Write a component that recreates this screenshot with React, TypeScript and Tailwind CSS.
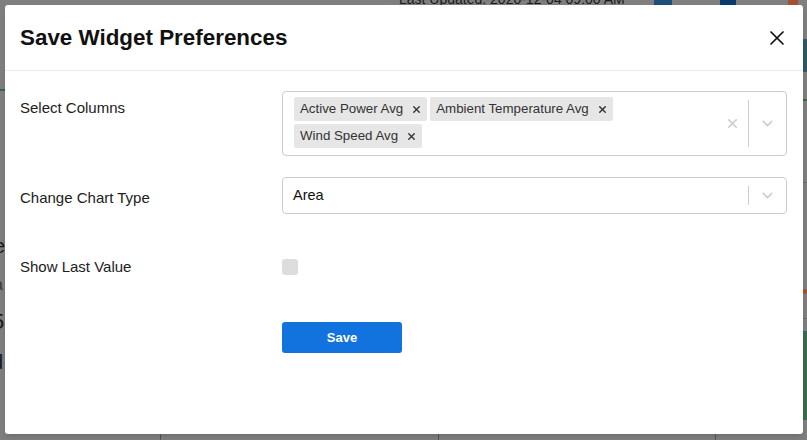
import { X, ChevronDown } from "lucide-react";

const font = { fontFamily: '"Liberation Sans", Arial, sans-serif' };

function Chip({ label }: { label: string }) {
  return (
    <div className="flex h-[24px] items-center rounded-[2px] bg-[#e6e6e6] m-[1.5px]">
      <span className="pl-[6px] pr-[3px] text-[13.3px] text-[#333]">{label}</span>
      <span className="flex items-center px-[5px] text-[#333]">
        <X size={11} strokeWidth={3} />
      </span>
    </div>
  );
}

function Indicators({ clear }: { clear?: boolean }) {
  return (
    <div className="flex items-center self-stretch">
      {clear && (
        <span className="flex items-center px-[8px] text-[#ccc]">
          <X size={15} strokeWidth={2.5} />
        </span>
      )}
      <span className="my-[8px] w-px self-stretch bg-[#ccc]" />
      <span className="flex items-center px-[10px] text-[#ccc]">
        <ChevronDown size={17} strokeWidth={2} />
      </span>
    </div>
  );
}

export default function App() {
  return (
    <div className="relative h-[440px] w-[807px] overflow-hidden bg-[#7f7f7f]" style={font}>
      {/* page behind the overlay */}
      <div className="absolute left-[399px] top-[-11px] text-[14px] text-[#1a1a1a]">
        Last Updated: 2020-12-04 09:00 AM
      </div>
      <div className="absolute left-[654px] top-0 h-[5px] w-[18px] bg-[#1c4f7c]" />
      <div className="absolute left-[720px] top-0 h-[5px] w-[16px] bg-[#0a3a6e]" />
      <div className="absolute left-[788px] top-0 h-[5px] w-[10px] bg-[#a2522e]" />
      <div className="absolute left-0 top-[89px] h-[2px] w-[5px] bg-[#2f6b42]" />
      <div className="absolute left-[-6px] top-[234px] text-[20px] leading-[24px] text-[#1a1a1a]">e</div>
      <div className="absolute left-[-6px] top-[275px] text-[16px] leading-[20px] text-[#3a3a3a]">a</div>
      <div className="absolute left-[-8px] top-[309px] text-[22px] leading-[26px] text-[#1a1a1a]">5</div>
      <div className="absolute left-[-8px] top-[350px] text-[20px] leading-[24px] text-[#1a1a1a]">d</div>
      <div className="absolute left-[803px] top-[39px] h-[33px] w-[4px] bg-[#2f5a62]" />
      <div className="absolute left-[803px] top-[99px] h-[2px] w-[4px] bg-[#2f6b42]" />
      <div className="absolute left-[803px] top-[182px] h-px w-[4px] bg-[#6a6a6a]" />
      <div className="absolute left-[803px] top-[289px] h-[5px] w-[4px] rounded-full bg-[#a2522e]" />
      <div className="absolute left-[803px] top-[318px] h-px w-[4px] bg-[#6a6a6a]" />
      <div className="absolute left-[803px] top-[331px] h-[89px] w-[4px] bg-[#3b6c4c]" />
      <div className="absolute left-[160px] top-[434px] h-[6px] w-px bg-[#555]" />
      <div className="absolute left-[438px] top-[434px] h-[6px] w-px bg-[#555]" />
      <div className="absolute left-[715px] top-[434px] h-[6px] w-px bg-[#555]" />

      {/* modal */}
      <div className="absolute left-[5px] top-[5px] flex h-[429px] w-[798px] flex-col rounded-[3px] bg-white shadow-md">
        <div className="flex h-[66px] items-center justify-between border-b border-[#e9ecef] pl-[15px] pr-[14px]">
          <h2 className="text-[22.4px] font-bold text-[#111]">Save Widget Preferences</h2>
          <X size={24} strokeWidth={1.7} className="text-[#111]" />
        </div>

        <div className="flex flex-col pl-[15px] pr-[16px] pt-[20px] text-[15px] text-[#212121]">
          <div className="grid grid-cols-[262px_1fr]">
            <div className="pt-[7px] leading-[20px]">Select Columns</div>
            <div className="flex min-h-[65px] items-stretch rounded-[4px] border border-[#ccc]">
              <div className="flex flex-1 flex-wrap content-start py-[3.5px] pl-[9.5px]">
                <Chip label="Active Power Avg" />
                <Chip label="Ambient Temperature Avg" />
                <Chip label="Wind Speed Avg" />
              </div>
              <Indicators clear />
            </div>
          </div>

          <div className="mt-[21px] grid grid-cols-[262px_1fr]">
            <div className="pt-[11px] leading-[20px]">Change Chart Type</div>
            <div className="flex h-[37px] items-stretch rounded-[4px] border border-[#ccc]">
              <div className="flex flex-1 items-center pl-[10px] text-[14.5px] text-[#111]">Area</div>
              <Indicators />
            </div>
          </div>

          <div className="mt-[43px] grid grid-cols-[262px_1fr] items-center">
            <div className="leading-[20px]">Show Last Value</div>
            <div className="h-[16px] w-[16px] rounded-[3px] bg-[#dddddd]" />
          </div>

          <div className="mt-[45px] grid grid-cols-[262px_1fr]">
            <div />
            <button className="h-[31px] w-[120px] rounded-[3px] bg-[#1273de] text-[13px] font-bold text-white">
              Save
            </button>
          </div>
        </div>
      </div>
    </div>
  );
}
